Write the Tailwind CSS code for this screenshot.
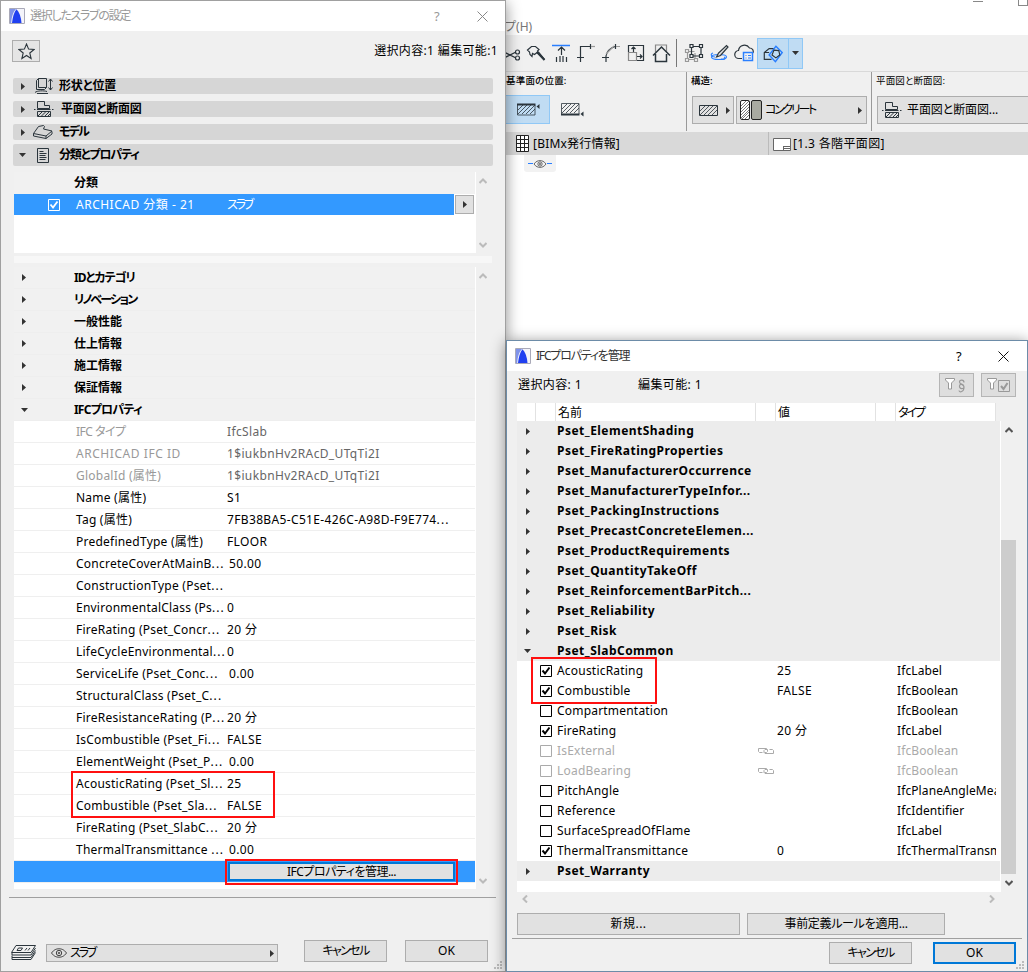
<!DOCTYPE html>
<html lang="ja">
<head>
  <meta charset="UTF-8" />
  <meta name="viewport" content="width=device-width, initial-scale=1.0"/>
  <title>選択したスラブの設定</title>
  <script src="https://cdn.jsdelivr.net/npm/@tailwindcss/browser@4"></script>
</head>
<body class="relative w-[1028px] h-[972px] overflow-hidden bg-white font-['Noto_Sans','Noto_Sans_CJK_JP',sans-serif] text-[12px] leading-none text-black whitespace-nowrap [font-feature-settings:'palt']">

  <!-- shared icons -->
  <svg class="hidden">
    <symbol id="logo" viewBox="0 0 16 16">
      <path d="M.5.5h15v15H.5z" fill="#f4f4fa" stroke="#a9a9b8"/>
      <path d="M1 15V1h6C4 4 2.500 9 2.200 15z" fill="#7f93ea"/>
      <path d="M3 15C3.700 9 5 4 7.500 1.200 10.500 4 12 9 12.500 15z" fill="#2040f0"/>
    </symbol>
    <symbol id="plan" viewBox="0 0 20 16" fill="none" stroke="#2b353c">
      <path d="M3.500 7.500v-7h7v4h5v3z"/>
      <path d="M0 8.500h1.500M3 8.500h13.500M18 8.500h1.500M3.500 10.500h13v5h-13zM4 15l4-4M7.500 15l4-4M11 15l4-4M14 15l2.500-2.500"/>
    </symbol>
    <symbol id="eye" viewBox="0 0 16 10" fill="none" stroke="#444">
      <path d="M.5 5C3 1.500 5.500.8 8 .8S13 1.500 15.500 5C13 8.500 10.500 9.200 8 9.200S3 8.500.5 5z"/>
      <circle cx="8" cy="5" r="2.700"/><circle cx="8" cy="5" r=".8"/>
    </symbol>
    <symbol id="right" viewBox="0 0 4 7"><path d="M0 0l4 3.500L0 7z" fill="#333"/></symbol>
    <symbol id="down" viewBox="0 0 7 4"><path d="M0 0h7L3.500 4z" fill="#333"/></symbol>
    <symbol id="chev" viewBox="0 0 8 6"><path d="M.5 5L4 1.500 7.500 5" fill="none" stroke="currentColor" stroke-width="2"/></symbol>
    <symbol id="hatch" viewBox="0 0 20 11" fill="none" stroke="#2b353c">
      <path d="M.5.5h18v10H.5z"/>
      <path d="M1 6l5-5M1 10l9-9M5 10l9-9M9 10l9-9M13 10l5-5" stroke-width=".8"/>
    </symbol>
    <symbol id="link" viewBox="0 0 16 8" fill="none" stroke="#aaa">
      <path d="M4.500 5.500h-3l-1-1v-3h8l1 1v2l-1 1h-2M11.500 2.500h3l1 1v3H7l-1-1v-2l1-1h2"/>
    </symbol>
    <symbol id="grip" viewBox="0 0 8 8" fill="#bbb">
      <path d="M6 0h2v2H6zM6 3h2v2H6zM6 6h2v2H6zM3 3h2v2H3zM3 6h2v2H3zM0 6h2v2H0z"/>
    </symbol>
  </svg>

  <!-- main window -->
  <main class="absolute left-[505px] top-0 w-[523px] h-full">
    <div class="relative h-[35px]">
      <span class="absolute left-0 top-[21px] text-[#777] text-[12px]">プ(H)</span>
      <div class="absolute left-[468px] top-[1px] w-[10px] h-px bg-[#888]"></div>
      <div class="absolute left-[513px] top-[-5px] w-[10px] h-[11px] border border-[#888]"></div>
    </div>

    <!-- toolbar -->
    <div class="h-[37px] bg-[#f0f0f0] border-b border-[#d9d9d9] flex items-center">
      <svg class="w-[172px] h-[36px] shrink-0" viewBox="505 36 172 36" fill="none" stroke="#2b353c" stroke-width="1.200">
        <path d="M504 53l12 6M504 59l12-6"/><circle cx="517.500" cy="53" r="2"/><circle cx="517.500" cy="59" r="2"/>
        <path d="M527.500 51l4-3.500h4l3.500 3-1.500 1.500 7 8.500-7.500-7-2.500 2-2-1-.5 3-2-2-.5-2.500z"/><path d="M537 53l7.500 8" stroke-width="2"/>
        <path d="M552 46.500h18" stroke="#2a7fff" stroke-width="1.500"/><path d="M561.500 56v-8M558 51.500l3.500-3.500 3.500 3.500M556.500 58v5M560 57v6M563 57v6M566.500 58v5"/>
        <path d="M580.500 63V47.500H590M577 58.500h7M590.500 45v5"/><path d="M591 47.500h4" stroke="#999"/>
        <path d="M606 63v-6c1-5 4-8 9-9.500M602 58.500h7M615.500 45v5"/><path d="M606 55l8-8M616 47.500h4" stroke="#999"/>
        <path d="M636.500 61.500v-8h-8v8z" stroke="#888"/><path d="M628.500 53v-6.500h15v15H637M633.500 53v-5M631.500 50l2-2 2 2M637 57.500h5M640 55.500l2 2-2 2"/>
        <path d="M655.500 53v-7h11v7" stroke="#888"/><path d="M653 56.500l8.500-8.500 8.500 8.500M655.500 55v7.500h11V55" stroke-width="1.500"/>
        <path d="M676.500 40v28" stroke="#777" stroke-width="1"/>
      </svg>
      <svg class="w-[80px] h-[36px] shrink-0" viewBox="677 36 80 36" fill="none" stroke="#2b353c" stroke-width="1.200">
        <path d="M687.500 60V52.500h7M687 60.500h8V54" stroke="#999"/><path d="M685.500 50.500h3v3h-3zM685.500 59.500h3v3h-3zM694.500 59.500h3v3h-3z" fill="#f0f0f0" stroke="#999"/>
        <path d="M691.500 47.500h9.500v9.500h-9.500z"/><path d="M690 45.500h3v3h-3zM699.500 45.500h3v3h-3zM690 55.500h3v3h-3zM699.500 55.500h3v3h-3z" fill="#f0f0f0"/>
        <ellipse cx="719" cy="58" rx="7.500" ry="2.500" stroke="#2a7fff"/><path d="M713 54c-3 1-2 4 2 4M721 60c4 1 5-1 3-2" stroke="#2a7fff"/>
        <path d="M716.500 58l2-4 8-7.500 1.500 1.500-7.500 8.500z" fill="#ddd"/>
        <path d="M742 59.500h-3a4 4 0 0 1-.5-8 6 6 0 0 1 11-2.500c3 0 4.500 2.500 3.500 5"/>
        <path d="M743.500 53.500h9v8h-9z" fill="#f0f0f0" stroke="#2a7fff" stroke-width="1.500"/><path d="M745.500 56.500h1M748 56.500h3M745.500 59h1M748 59h3" stroke="#2a7fff"/>
      </svg>
      <div class="flex h-[31px] border border-[#90c8f6] bg-[#c0dcf3] w-[46px] shrink-0">
        <svg class="w-[31px] h-full border-r border-[#90c8f6] shrink-0" viewBox="758 39 31 29" fill="none" stroke="#2b353c" stroke-width="1.200">
          <path d="M772 59.500h-7.500v-7l5-4h5M764.500 52.500h5"/>
          <path d="M776.500 46l6.500 6.500-7 9.500-6.500-7z" stroke="#2a7fff" stroke-width="1.500"/><path d="M774.500 50l5 .5 1 4.500-4 3-4-3z"/>
        </svg>
        <svg class="w-[7px] h-[4px] m-auto"><use href="#down"/></svg>
      </div>
    </div>

    <!-- info box -->
    <div class="h-[60px] bg-[#f0f0f0] flex">
      <div class="w-[182px] shrink-0 border-r border-[#999] h-[59px] flex flex-col pt-[4px]">
        <span class="pl-px text-[9.500px] h-[19px] leading-[10px] tracking-[0.200px] font-medium">基準面の位置:</span>
        <div class="flex items-center">
          <div class="w-[45px] h-[29px] border border-[#90c8f6] bg-[#c0dcf3] flex items-center pl-[11px]">
            <svg class="w-[24px] h-[14px]" viewBox="0 0 24 14" fill="none" stroke="#2b353c"><path stroke-width=".8" d="M1 7l5-5M1 11l9-9M5 11l9-9M9 11l9-9M13 11l5-5M.5 2v10H18V2"/><path d="M0 1.500h18.500" stroke-width="2"/><path d="M22.500 1v5l-3-2.500z" fill="#2b353c" stroke="none"/></svg>
          </div>
          <svg class="w-[24px] h-[14px] ml-[11px]" viewBox="0 0 24 14" fill="none" stroke="#2b353c"><path stroke-width=".8" d="M1 6l5-5M1 10l9-9M5 10l9-9M9 10l9-9M13 10l5-5M.5 11V.5H18V11"/><path d="M0 11.500h18.500" stroke-width="2"/><path d="M22.500 8.500v5l-3-2.500z" fill="#2b353c" stroke="none"/></svg>
        </div>
      </div>
      <div class="w-[185px] shrink-0 border-r border-[#999] h-[59px] pt-[4px] pl-[4px]">
        <div class="text-[9.500px] h-[20px] leading-[10px] font-medium">構造:</div>
        <div class="flex gap-[2px] pl-px">
          <div class="w-[42px] h-[28px] border border-[#adadad] bg-[#e1e1e1] flex items-center pl-[6px] gap-[7px]">
            <svg class="w-[20px] h-[11px]"><use href="#hatch"/></svg>
            <svg class="w-[4px] h-[7px]"><use href="#right"/></svg>
          </div>
          <div class="w-[131px] h-[28px] border border-[#adadad] bg-[#e1e1e1] flex items-center pl-[3px]">
            <svg class="w-[22px] h-[20px]" viewBox="0 0 22 20" fill="none" stroke="#222"><rect x=".5" y=".5" width="9" height="19" rx="1.500" fill="#fff"/><path d="M1 6l5-5M1 9l8-8M1 12l8-8M1 15l8-8M1 18l8-8M2 19l7-7M5 19l4-4" stroke-width=".6"/><rect x="11.500" y=".5" width="10" height="19" rx="1.500" fill="#a9aaa1"/></svg>
            <span class="ml-[3px] tracking-[-2.300px]">コンクリート</span>
            <svg class="w-[4px] h-[7px] ml-auto mr-[4px]"><use href="#right"/></svg>
          </div>
        </div>
      </div>
      <div class="flex-1 min-w-0 overflow-hidden pt-[4px] pl-[4px]">
        <div class="text-[9.500px] h-[20px] leading-[10px] tracking-[0.150px]">平面図と断面図:</div>
        <div class="w-[170px] h-[28px] ml-px border border-[#adadad] bg-[#e1e1e1] flex items-center pl-[4px]">
          <svg class="w-[20px] h-[16px]"><use href="#plan"/></svg>
          <span class="ml-[5px] tracking-[-0.100px]">平面図と断面図...</span>
        </div>
      </div>
    </div>

    <!-- tab bar -->
    <div class="h-[23px] bg-[#d9d9d9] flex items-center">
      <div class="w-[264px] h-full border-r border-[#bbb] flex items-center pl-[11px]">
        <svg class="w-[13px] h-[17px]" viewBox="0 0 13 17" fill="#fff" stroke="#222"><path d="M.5.5h12v16H.5z"/><path d="M4.500 0v17M8.500 0v17M0 4.500h13M0 8.500h13M0 12.500h13"/></svg>
        <span class="ml-[4px] tracking-[0.200px]">[BIMx発行情報]</span>
      </div>
      <svg class="w-[18px] h-[13px] ml-[4px] mt-px" viewBox="0 0 18 13" fill="#fff" stroke="#666"><path d="M.5.5h17v12H.5z"/><path d="M10.500 8.500h7M10.500 8v4M10.500 10.500h7"/></svg>
      <span class="ml-[2px] tracking-[0.350px]">[1.3 各階平面図]</span>
    </div>
    <div class="ml-[19px] w-[32px] h-[17px] rounded-b-[3px] bg-[#f2f2f2] flex items-center justify-center">
      <div class="w-[5px] h-px bg-[#2a7fff] shrink-0"></div>
      <svg class="w-[14px] h-[8px] shrink-0"><use href="#eye"/></svg>
      <div class="w-[5px] h-px bg-[#2a7fff] shrink-0"></div>
    </div>
  </main>

  <!-- slab settings dialog -->
  <section class="absolute left-0 top-0 w-[506px] h-[972px] bg-[#f0f0f0] border border-[#a0a0a0] shadow-[0_3px_14px_rgba(0,0,0,0.45)]">
    <header class="h-[30px] bg-white flex items-center text-[#999] pl-[8px]">
      <svg class="w-[16px] h-[16px]"><use href="#logo"/></svg>
      <span class="ml-[5px] tracking-[-1.300px]">選択したスラブの設定</span>
      <span class="ml-auto w-[8px] text-[13px]">?</span>
      <svg class="w-[11px] h-[11px] ml-[35px] mr-[17px]" viewBox="0 0 11 11" fill="none" stroke="#888"><path d="M.5.5l10 10M10.500.5l-10 10"/></svg>
    </header>

    <div class="flex items-center pl-[11px] pr-[7px] h-[40px]">
      <button class="w-[28px] h-[22px] border border-[#adadad] bg-[#e5e5e5] flex items-center justify-center">
        <svg class="w-[17px] h-[17px]" viewBox="0 0 17 17" fill="none" stroke="#2b353c" stroke-width="1.100"><path d="M8.500 1l2.100 5.100 5.400.4-4.200 3.500 1.300 5.500-4.600-3-4.600 3 1.300-5.500L1 6.500l5.400-.4z"/></svg>
      </button>
      <span class="ml-auto tracking-[0.350px]">選択内容:1 編集可能:1</span>
    </div>

    <!-- collapsible panels -->
    <nav class="ml-[12px] w-[480px] mt-[7px] flex flex-col gap-[7px] font-bold">
      <div class="h-[16px] rounded-[2px] bg-[#d6d6d6] flex items-center pl-[8px]">
        <svg class="w-[4px] h-[7px]"><use href="#right"/></svg>
        <svg class="w-[18px] h-[16px] ml-[10px] shrink-0" viewBox="0 0 18 16" fill="none" stroke="#2b353c"><path d="M3.500.5h8v9h-8zM3.500.5l-2 2v9h8l2-2M0 14.500c2-2 9-2 12-1M2 15.500h11M15.500 1v11M13.500 3.500l2-2.500 2 2.500M13.500 9.500l2 2.500 2-2.500"/></svg>
        <span class="ml-[6px] tracking-[-0.200px]">形状と位置</span>
      </div>
      <div class="h-[16px] rounded-[2px] bg-[#d6d6d6] flex items-center pl-[8px]">
        <svg class="w-[4px] h-[7px]"><use href="#right"/></svg>
        <svg class="w-[20px] h-[16px] ml-[9px]"><use href="#plan"/></svg>
        <span class="ml-[7px] tracking-[-0.200px]">平面図と断面図</span>
      </div>
      <div class="h-[16px] rounded-[2px] bg-[#d6d6d6] flex items-center pl-[8px]">
        <svg class="w-[4px] h-[7px]"><use href="#right"/></svg>
        <svg class="w-[20px] h-[14px] ml-[8px]" viewBox="0 0 20 14" fill="none" stroke="#2b353c"><path d="M.5 8.500l5-7 5-1 1 1-1 2.500 8.500 2-6 5zM.5 8.500v2.500L13 13.500l6-4.500V6.500M13 11v2.500"/></svg>
        <span class="ml-[6px] tracking-[-1.800px]">モデル</span>
      </div>
      <div class="h-[22px] -mt-[3px] rounded-[2px] bg-[#d6d6d6] flex items-center pl-[6px]">
        <svg class="w-[7px] h-[4px]"><use href="#down"/></svg>
        <svg class="w-[12px] h-[15px] ml-[11px]" viewBox="0 0 12 15" fill="none" stroke="#2b353c"><path d="M.5.500h11v14H.5zM2.500 3.500h4M2.500 5.500h7M2.500 7.500h6M2.500 9.500h7M2.500 11.500h6"/></svg>
        <span class="ml-[10px] tracking-[-1.200px]">分類とプロパティ</span>
      </div>
    </nav>

    <!-- classification list -->
    <div class="ml-[13px] mt-[6px] flex h-[81px]">
      <div class="w-[462px] bg-white">
        <div class="h-[22px] bg-[#f1f1f1] mr-px flex items-center font-bold pl-[60px]">分類</div>
        <div class="h-[21px] flex text-white">
          <div class="w-[440px] bg-[#3399ff] flex items-center">
            <svg class="w-[12px] h-[12px] ml-[34px]" viewBox="0 0 12 12" fill="none" stroke="#fff"><path d="M.5.5h11v11H.5z"/><path d="M2.500 5.500l2.500 3 4.500-6" stroke-width="1.800"/></svg>
            <span class="ml-[16px] w-[151px] tracking-[0.500px]">ARCHICAD 分類 - 21</span>
            <span class="tracking-[-2.200px]">スラブ</span>
          </div>
          <div class="ml-px mt-px w-[19px] h-[19px] border border-[#adadad] bg-[#e1e1e1] flex items-center justify-center"><svg class="w-[4px] h-[7px]"><use href="#right"/></svg></div>
        </div>
      </div>
      <div class="w-[14px] flex flex-col items-center justify-between pt-[6px] pb-[5px] text-[#bbb]">
        <svg class="w-[8px] h-[6px]"><use href="#chev"/></svg>
        <svg class="w-[8px] h-[6px] rotate-180"><use href="#chev"/></svg>
      </div>
    </div>
    <div class="ml-[13px] mt-[3px] w-[478px] h-[7px] bg-[#f7f7f7]"></div>

    <!-- property list -->
    <div class="ml-[13px] mt-[4px] flex h-[622px]">
      <div class="w-[462px] bg-white pr-px">
        <div id="groups"></div>
        <div id="props"></div>
        <div class="h-[21px] bg-[#3399ff] pl-[214px] pt-px">
          <button class="w-[227px] h-[19px] border-2 border-[#0078d7] bg-[#e1e1e1] flex items-center justify-center tracking-[-0.500px]">IFCプロパティを管理...</button>
        </div>
        <div class="h-px bg-[#efefef]"></div>
      </div>
      <div class="w-[14px] flex flex-col items-center justify-between pt-[6px] pb-[5px] text-[#bbb]">
        <svg class="w-[8px] h-[6px]"><use href="#chev"/></svg>
        <svg class="w-[8px] h-[6px] rotate-180"><use href="#chev"/></svg>
      </div>
    </div>

    <footer class="ml-[8px] mr-[9px] mt-[8px] border-t border-[#a0a0a0] flex pt-[42px] pl-[2px]">
      <svg class="w-[25px] h-[15px] mt-[5px]" viewBox="0 0 25 15" fill="none" stroke="#2b353c"><path d="M5 .5h19.500l-4.500 7H.5zM1 8v2h19l4.500-7M1 10.500v2h19l4.500-7M1 12.500v2h19l4.500-7"/><path d="M7.500 3h4l-1.500 2.500H6zM14 5.500L16 3M17 5.500L19 3" /></svg>
      <div class="ml-[10px] mt-[4px] w-[232px] h-[18px] border border-[#adadad] bg-[#e1e1e1] flex items-center pl-[4px]">
        <svg class="w-[16px] h-[10px]"><use href="#eye"/></svg>
        <span class="ml-[3px] tracking-[-2.200px]">スラブ</span>
        <svg class="w-[4px] h-[7px] ml-auto mr-[3px]"><use href="#right"/></svg>
      </div>
      <button class="ml-[26px] w-[83px] h-[22px] border border-[#adadad] bg-[#e1e1e1] tracking-[-1.600px]">キャンセル</button>
      <button class="ml-[18px] w-[83px] h-[22px] border border-[#adadad] bg-[#e1e1e1]">OK</button>
    </footer>
    <svg class="absolute right-[3px] bottom-[2px] w-[8px] h-[8px]"><use href="#grip"/></svg>

    <!-- highlights -->
    <div class="absolute left-[70px] top-[770px] w-[204px] h-[47px] border-2 border-[#ff1010]"></div>
    <div class="absolute left-[224px] top-[858px] w-[233px] h-[26px] border-2 border-[#ff1010]"></div>
  </section>

  <!-- IFC property dialog -->
  <section class="absolute left-[506px] top-[340px] w-[522px] h-[632px] bg-[#f0f0f0] border border-[#6d8ca8] shadow-[0_2px_14px_rgba(0,0,0,0.45)]">
    <header class="h-[30px] bg-white flex items-center pl-[8px]">
      <svg class="w-[16px] h-[16px]"><use href="#logo"/></svg>
      <span class="ml-[5px] tracking-[-1.200px] text-[#333]">IFCプロパティを管理</span>
      <span class="ml-auto w-[8px] text-[13px]">?</span>
      <svg class="w-[11px] h-[11px] ml-[34px] mr-[18px]" viewBox="0 0 11 11" fill="none" stroke="#111"><path d="M.5.5l10 10M10.500.5l-10 10"/></svg>
    </header>

    <div class="h-[32px] flex items-center pl-[11px] pb-[4px] tracking-[0.400px]">
      <span class="w-[120px]">選択内容: 1</span>
      <span>編集可能: 1</span>
      <div class="ml-auto w-[35px] h-[24px] border border-[#b5b5b5] bg-[#dedede]">
        <svg class="w-[33px] h-[22px]" viewBox="0 0 33 22" fill="none" stroke="#999"><path d="M5.500 4.500h9v1.500l-3 3v6h-3V9l-3-3z" fill="#fff"/><path d="M24 8.500c0-3-4.500-3-4.500-.5s4.500 2.500 4.500 5-5 2-4.500-1 4-2 4.500.5M24 13c0 5-4.500 6-5 3.500" stroke-width="1.200"/></svg>
      </div>
      <div class="ml-[7px] mr-[11px] w-[35px] h-[24px] border border-[#b5b5b5] bg-[#dedede]">
        <svg class="w-[33px] h-[22px]" viewBox="0 0 33 22" fill="none" stroke="#999"><path d="M5.500 4.500h9v1.500l-3 3v6h-3V9l-3-3z" fill="#fff"/><path d="M16.500 6.500h11v11h-11z"/><path d="M19 12l2.500 3 4-6" stroke-width="2"/></svg>
      </div>
    </div>

    <div class="ml-[10px] w-[479px] h-[18px] bg-white flex items-center leading-[20px]">
      <div class="w-[19px] h-full border-r border-[#e2e2e2]"></div>
      <div class="w-[20px] h-full border-r border-[#e2e2e2]"></div>
      <div class="w-[200px] h-full border-r border-[#e2e2e2] pl-[2px]">名前</div>
      <div class="w-[20px] h-full border-r border-[#e2e2e2]"></div>
      <div class="w-[100px] h-full border-r border-[#e2e2e2] pl-[2px]">値</div>
      <div class="w-[20px] h-full border-r border-[#e2e2e2]"></div>
      <div class="w-[100px] h-full border-r border-[#e2e2e2] pl-[2px] tracking-[-2px]">タイプ</div>
    </div>

    <div class="ml-[10px] flex h-[471px]">
      <div id="psets" class="w-[484px] bg-white pr-px"></div>
      <div class="w-[15px] flex flex-col items-center text-[#555]">
        <svg class="w-[8px] h-[6px] mt-[6px]"><use href="#chev"/></svg>
        <div class="w-full h-[334px] mt-[107px] bg-[#cdcdcd]"></div>
        <svg class="w-[8px] h-[6px] mt-[6px] rotate-180"><use href="#chev"/></svg>
      </div>
    </div>

    <div class="h-[21px] ml-[14px] mr-[31px] flex justify-between pt-[4px] text-[#bbb]">
      <svg class="w-[8px] h-[6px] -rotate-90"><use href="#chev"/></svg>
      <svg class="w-[8px] h-[6px] rotate-90"><use href="#chev"/></svg>
    </div>
    <div class="ml-[10px] flex gap-[7px]">
      <button class="w-[223px] h-[22px] border border-[#adadad] bg-[#e1e1e1] tracking-[0.500px]">新規...</button>
      <button class="w-[198px] h-[22px] border border-[#adadad] bg-[#e1e1e1] tracking-[-0.300px]">事前定義ルールを適用...</button>
    </div>
    <footer class="mt-[3px] mx-[5px] border-t border-[#a0a0a0] pt-[3px] flex justify-end gap-[21px] pr-[6px]">
      <button class="w-[83px] h-[22px] border border-[#adadad] bg-[#e1e1e1] tracking-[-1.600px]">キャンセル</button>
      <button class="w-[83px] h-[22px] border-2 border-[#0078d7] bg-[#e1e1e1]">OK</button>
    </footer>
    <svg class="absolute right-[3px] bottom-[2px] w-[8px] h-[8px]"><use href="#grip"/></svg>
    <div class="absolute left-[24px] top-[316px] w-[126px] h-[47px] border-2 border-[#ff1010]"></div>
  </section>

  <script>
    const right = '<svg class="w-[4px] h-[7px] ml-px shrink-0"><use href="#right"/></svg>';
    const down = '<svg class="w-[7px] h-[4px] shrink-0"><use href="#down"/></svg>';
    // the trailing ellipsis is set a little wider than the text
    const dots = (s) => s.replace("...", '<span class="tracking-[1.100px]">...</span>');

    // [label, extra classes]
    const groups = [
      ["IDとカテゴリ", "tracking-[-1px]"],
      ["リノベーション", "tracking-[-1.800px]"],
      ["一般性能", ""],
      ["仕上情報", ""],
      ["施工情報", ""],
      ["保証情報", ""],
      ["IFCプロパティ", "tracking-[-0.800px]"],
    ];
    document.getElementById("groups").innerHTML = groups.map(([label, cls], i) => `
      <div class="h-[22px] bg-[#f1f1f1] border-b border-[#eeeeee] flex items-center font-bold">
        <span class="w-[60px] pl-[7px]">${i === 6 ? down : right}</span><span class="${cls}">${label}</span>
      </div>`).join("");

    // [name, value, state]
    const props = [
      ["IFC タイプ", "IfcSlab", "off"],
      ["ARCHICAD IFC ID", "1$iukbnHv2RAcD_UTqTi2I", "off"],
      ["GlobalId (属性)", "1$iukbnHv2RAcD_UTqTi2I", "off"],
      ["Name (属性)", "S1"],
      ["Tag (属性)", "7FB38BA5-C51E-426C-A98D-F9E774..."],
      ["PredefinedType (属性)", "FLOOR"],
      ["ConcreteCoverAtMainB...", "50.00", "num"],
      ["ConstructionType (Pset...", ""],
      ["EnvironmentalClass (Ps...", "0"],
      ["FireRating (Pset_Concr...", "20 分"],
      ["LifeCycleEnvironmental...", "0"],
      ["ServiceLife (Pset_Conc...", "0.00", "num"],
      ["StructuralClass (Pset_C...", ""],
      ["FireResistanceRating (P...", "20 分"],
      ["IsCombustible (Pset_Fi...", "FALSE"],
      ["ElementWeight (Pset_P...", "0.00", "num"],
      ["AcousticRating (Pset_Sl...", "25"],
      ["Combustible (Pset_Sla...", "FALSE"],
      ["FireRating (Pset_SlabC...", "20 分"],
      ["ThermalTransmittance ...", "0.00", "num"],
    ];
    document.getElementById("props").innerHTML = props.map(([name, value, state], i) => `
      <div class="h-[22px] border-b border-[#efefef] flex items-center pl-[62px]">
        <span class="w-[151px] shrink-0 ${i === 0 ? "tracking-[-0.500px]" : i === 1 ? "tracking-[0.550px]" : "tracking-[0.230px]"} ${state === "off" ? "text-[#999]" : ""}">${dots(name)}</span>
        <span class="tracking-[0.350px] ${state === "off" ? "text-[#666]" : ""} ${state === "num" ? "pl-[2px]" : ""}">${dots(value)}</span>
      </div>`).join("");

    const psets = ["ElementShading", "FireRatingProperties", "ManufacturerOccurrence", "ManufacturerTypeInfor...",
      "PackingInstructions", "PrecastConcreteElemen...", "ProductRequirements", "QuantityTakeOff",
      "ReinforcementBarPitch...", "Reliability", "Risk", "SlabCommon"];
    const group = (name) => `
      <div class="h-[20px] bg-[#ececec] flex items-center font-bold tracking-[0.470px]">
        <span class="w-[40px] ${name === "SlabCommon" ? "pl-[7px]" : "pl-[8px]"}">${name === "SlabCommon" ? down : right}</span><span>Pset_${name}</span>
      </div>`;

    // [name, checked, value, type, disabled]
    const items = [
      ["AcousticRating", 1, "25", "IfcLabel"],
      ["Combustible", 1, "FALSE", "IfcBoolean"],
      ["Compartmentation", 0, "", "IfcBoolean"],
      ["FireRating", 1, "20 分", "IfcLabel"],
      ["IsExternal", 0, "", "IfcBoolean", 1],
      ["LoadBearing", 0, "", "IfcBoolean", 1],
      ["PitchAngle", 0, "", "IfcPlaneAngleMeasure"],
      ["Reference", 0, "", "IfcIdentifier"],
      ["SurfaceSpreadOfFlame", 0, "", "IfcLabel"],
      ["ThermalTransmittance", 1, "0", "IfcThermalTransmittance"],
    ];
    const item = ([name, on, value, type, off]) => `
      <div class="h-[20px] flex items-center pl-[23px] ${off ? "text-[#aaa]" : ""}">
        <svg class="w-[12px] h-[12px] mr-[5px] shrink-0" viewBox="0 0 12 12" fill="none" stroke="currentColor"><path d="M.5.5h11v11H.5z"/>${on ? '<path d="M2.500 5.500l2.500 3 4.500-6" stroke-width="2"/>' : ""}</svg>
        <span class="w-[201px] shrink-0 tracking-[0.200px]">${name}</span>
        <span class="w-[19px] shrink-0">${off ? '<svg class="w-[16px] h-[8px]"><use href="#link"/></svg>' : ""}</span>
        <span class="w-[120px] shrink-0 tracking-[0.350px]">${value}</span>
        <span class="w-[99px] h-[20px] leading-[20px] overflow-hidden tracking-[0.100px]">${type}</span>
      </div>`;
    document.getElementById("psets").innerHTML = psets.map(group).join("") + items.map(item).join("") + group("Warranty");
  </script>
</body>
</html>
